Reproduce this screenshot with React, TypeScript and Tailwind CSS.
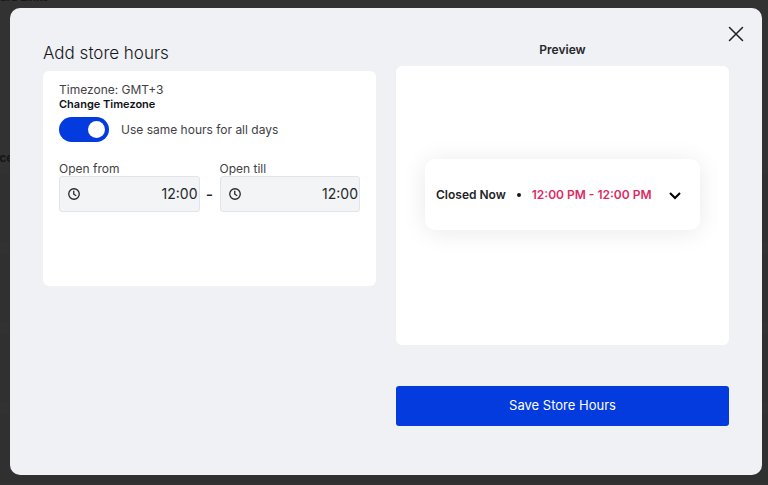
import React, { useState } from 'react';

interface TimeFieldProps {
  id: string;
  label: string;
  value: string;
  onChange: (value: string) => void;
}

function ClockIcon() {
  return (
    <svg className="h-3 w-3 shrink-0" viewBox="0 0 24 24" fill="none" stroke="currentColor" strokeWidth="2.6" aria-hidden="true">
      <circle cx="12" cy="12" r="10.5" />
      <path d="M11.5 5.5V12.5L16.5 15.5" />
    </svg>
  );
}

function TimeField({ id, label, value, onChange }: TimeFieldProps) {
  return (
    <div className="flex-1 min-w-0">
      <label htmlFor={id} className="block text-xs leading-[14px]">{label}</label>
      <div className="flex h-9 items-center rounded-[3px] border border-[#e1e4e9] bg-[#f2f4f6] pl-2 pr-px text-[#25272b]">
        <ClockIcon />
        <input
          id={id}
          type="text"
          inputMode="numeric"
          value={value}
          onChange={(e) => onChange(e.target.value)}
          className="w-full min-w-0 bg-transparent text-right text-sm outline-none"
        />
      </div>
    </div>
  );
}

function Backdrop() {
  return (
    <div className="absolute inset-0 overflow-hidden bg-[#323233] font-bold text-[#161617]" aria-hidden="true">
      <div className="-mt-2.5 text-[11px] leading-[14px]">ard Links</div>
      <div className="mt-[146px] -ml-1 text-xs leading-4">ice</div>
      <div className="mt-2 space-y-3">
        <div className="h-[68px] bg-[#303030]" />
        <div className="h-[68px] bg-[#303030]" />
        <div className="h-[68px] bg-[#303030]" />
        <div className="h-[68px] bg-[#303030]" />
      </div>
    </div>
  );
}

function App() {
  const [sameHours, setSameHours] = useState(true);
  const [openFrom, setOpenFrom] = useState('12:00');
  const [openTill, setOpenTill] = useState('12:00');

  return (
    <div className="relative min-h-screen bg-[#323233] pt-2 pr-1.5 pb-2.5 pl-2.5 font-['Inter',sans-serif]">
      <Backdrop />
      <div role="dialog" aria-labelledby="dialog-title" className="relative min-h-[467px] rounded-[10px] bg-[#eff1f5] px-[33px] pb-12">
        <button type="button" aria-label="Close" className="absolute top-4 right-4 p-0.5 text-[#1d1f24]">
          <svg className="h-4 w-4" viewBox="0 0 16 16" fill="none" stroke="currentColor" strokeWidth="1.5" strokeLinecap="round">
            <path d="M1.5 1.5L14.5 14.5M14.5 1.5L1.5 14.5" />
          </svg>
        </button>
        <div className="grid grid-cols-2 gap-5">
          <section className="pt-[33px]">
            <h1 id="dialog-title" className="text-[17px] leading-6 font-light text-[#151619]">Add store hours</h1>
            <div className="mt-1.5 min-h-[215px] rounded-md bg-white px-4 pt-3 text-xs text-[#3f4145]">
              <div className="leading-[14px]">Timezone: GMT+3</div>
              <button type="button" className="block text-[11px] leading-[14px] font-semibold text-[#111216]">Change Timezone</button>
              <label className="mt-1.5 flex items-center gap-3">
                <input
                  type="checkbox"
                  role="switch"
                  checked={sameHours}
                  onChange={(e) => setSameHours(e.target.checked)}
                  className="peer sr-only"
                />
                <span className="flex h-[25px] w-[50px] items-center rounded-full bg-gray-300 px-1 peer-checked:justify-end peer-checked:bg-[#033bdf]">
                  <span className="h-[17px] w-[17px] rounded-full bg-white" />
                </span>
                <span>Use same hours for all days</span>
              </label>
              <div className="mt-5 flex">
                <TimeField id="open-from" label="Open from" value={openFrom} onChange={setOpenFrom} />
                <span className="w-5 pt-5 text-center text-base leading-6 font-medium text-[#25272b]">-</span>
                <TimeField id="open-till" label="Open till" value={openTill} onChange={setOpenTill} />
              </div>
            </div>
          </section>
          <section className="pt-[34px]">
            <h2 className="text-center text-xs leading-4 font-semibold text-[#25272b]">Preview</h2>
            <div className="mt-2 flex min-h-[279px] items-center rounded-md bg-white px-[29px] pb-[22px]">
              <div className="flex h-[71px] w-full items-center rounded-[10px] bg-white px-[11px] text-xs font-semibold text-[#222326] shadow-[0_2px_24px_rgba(0,0,0,0.09)]">
                <span>Closed Now</span>
                <span className="mx-[11px] h-1 w-1 rounded-full bg-[#17181a]" />
                <span className="text-[#dd2b63]">12:00 PM - 12:00 PM</span>
                <button type="button" aria-label="Show all hours" className="ml-auto p-2 text-black">
                  <svg className="h-3 w-3" viewBox="0 0 12 12" fill="none" stroke="currentColor" strokeWidth="2">
                    <path d="M1 4L6 9L11 4" />
                  </svg>
                </button>
              </div>
            </div>
            <button type="button" className="mt-[41px] h-10 w-full rounded-[3px] bg-[#033bdf] text-[13px] text-white">
              Save Store Hours
            </button>
          </section>
        </div>
      </div>
    </div>
  );
}

export default App;
